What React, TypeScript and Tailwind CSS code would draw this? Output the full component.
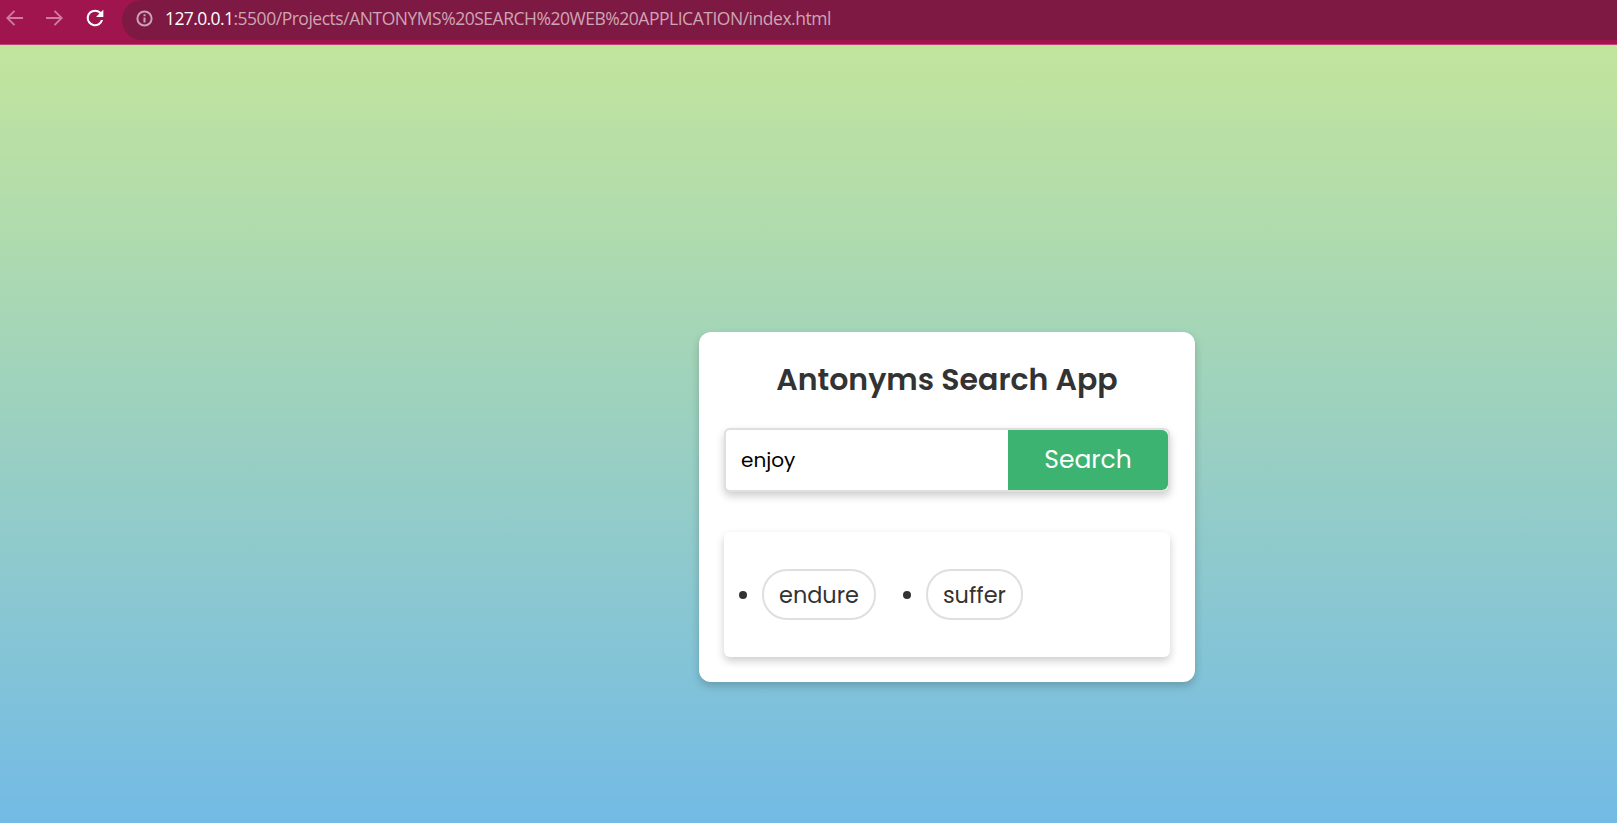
const antonyms = ["endure", "suffer"];

function BrowserBar() {
  return (
    <header className="flex h-[45px] items-start border-b border-[#c04078] bg-[#a0154e] font-['Open_Sans',sans-serif]">
      <div className="flex h-9 w-[122px] shrink-0 items-center pl-[6px]">
        <svg width="17" height="16" viewBox="0 0 17 16" fill="none" stroke="#cf7ba2" strokeWidth="1.9">
          <path d="M17 8H1.5M8.500 .8 1.300 8l7.200 7.200" />
        </svg>
        <svg className="ml-[23px]" width="17" height="16" viewBox="0 0 17 16" fill="none" stroke="#cf7ba2" strokeWidth="1.9">
          <path d="M0 8h15.500M8.500 .8 15.700 8l-7.200 7.200" />
        </svg>
        <svg className="ml-[20px]" width="24" height="24" viewBox="0 0 24 24" fill="#fff">
          <path d="M17.900 6.100A8.350 8.350 0 0 0 12 3.650a8.350 8.350 0 1 0 8.070 10.450h-2.170A6.260 6.260 0 1 1 12 5.740c1.730 0 3.280.72 4.410 1.860L13.050 10.950h7.300V3.650z" />
        </svg>
      </div>
      <div className="flex h-10 flex-1 items-center rounded-l-full bg-[#7d1942] pb-[3px] pl-[14px]">
        <svg width="17" height="17" viewBox="0 0 17 17" fill="none" stroke="#c8a3b3" strokeWidth="2">
          <circle cx="8.500" cy="8.500" r="7.100" />
          <path d="M8.500 7.500v5M8.500 4.300v1.900" />
        </svg>
        <p className="ml-[12px] whitespace-nowrap text-[17.500px] tracking-[-0.475px] text-[#cda5b5]">
          <span className="tracking-[-0.6px] text-white">127.0.0.1</span>:5500/Projects/ANTONYMS%20SEARCH%20WEB%20APPLICATION/index.html
        </p>
      </div>
    </header>
  );
}

export default function App() {
  return (
    <div className="flex h-[823px] w-full flex-col overflow-hidden">
      <BrowserBar />
      <main className="flex-1 bg-[linear-gradient(180deg,#c2e59c_0px,#64b3f4_924px)] pt-[287px] pl-[699px] font-['Poppins','Inter',sans-serif] text-[#333]">
        <section className="h-[350px] w-[496px] rounded-[12px] bg-white px-[25px] pt-[25px] shadow-[0_4px_8px_rgba(0,0,0,0.2)]">
          <h1 className="h-[46px] text-center text-[30px] leading-[46px] font-semibold whitespace-nowrap">Antonyms Search App</h1>
          <div className="mt-[25px] flex h-16 rounded-[6px] border-2 border-[#dfdfdf] bg-white shadow-[0_4px_8px_rgba(0,0,0,0.2)]">
            <input defaultValue="enjoy" className="min-w-0 flex-1 rounded-l px-[15px] text-[20px] text-black outline-none" />
            <button className="w-40 rounded-r-[6px] bg-[#3cb371] text-[25px] text-white">Search</button>
          </div>
          <ul className="mt-10 flex h-[125px] items-center rounded-[6px] pl-[15px] shadow-[0_4px_8px_rgba(0,0,0,0.2)]">
            {antonyms.map((word) => (
              <li key={word} className="mr-[27px] flex items-center">
                <span className="mr-[15px] size-2 rounded-full bg-[#333]" />
                <span className="flex h-[51px] items-center rounded-[25px] border-2 border-[#dfdfdf] px-[15px] pt-[2px] text-[22.400px]">{word}</span>
              </li>
            ))}
          </ul>
        </section>
      </main>
    </div>
  );
}
